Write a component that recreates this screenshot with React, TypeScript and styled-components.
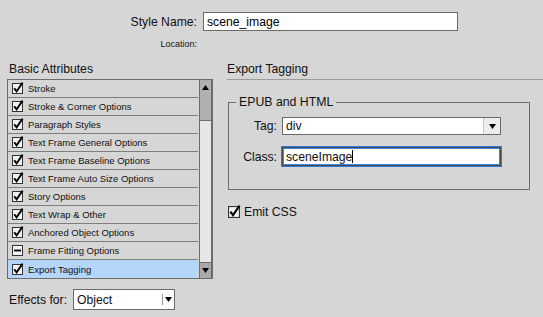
import React from 'react'
import styled, { createGlobalStyle } from 'styled-components'

type CheckState = 'on' | 'off' | 'mixed'

const attributes: { label: string; state: CheckState; selected?: boolean }[] = [
  { label: 'Stroke', state: 'on' },
  { label: 'Stroke & Corner Options', state: 'on' },
  { label: 'Paragraph Styles', state: 'on' },
  { label: 'Text Frame General Options', state: 'on' },
  { label: 'Text Frame Baseline Options', state: 'on' },
  { label: 'Text Frame Auto Size Options', state: 'on' },
  { label: 'Story Options', state: 'on' },
  { label: 'Text Wrap & Other', state: 'on' },
  { label: 'Anchored Object Options', state: 'on' },
  { label: 'Frame Fitting Options', state: 'mixed' },
  { label: 'Export Tagging', state: 'on', selected: true },
]

const GlobalStyle = createGlobalStyle`
  html, body {
    margin: 0;
    padding: 0;
    background: #d6d6d6;
  }
  body {
    font-family: 'Liberation Sans', Arial, sans-serif;
    color: #111;
  }
`

const CheckBox = ({ state, size = 11 }: { state: CheckState; size?: number }) => (
  <BoxSvg width={size} height={size} viewBox="0 0 11 11">
    <rect x="0.5" y="0.5" width="10" height="10" fill="#f2f2f2" stroke="#333" />
    {state === 'on' && (
      <path d="M2.2 5.2 L4.6 8.4 L10.6 -0.4" stroke="#000" strokeWidth="1.9" fill="none" />
    )}
    {state === 'mixed' && <rect x="2" y="4.6" width="7" height="1.8" fill="#000" />}
  </BoxSvg>
)

const Arrow = ({ up }: { up?: boolean }) => (
  <svg width="7" height="5" viewBox="0 0 7 5">
    <path d={up ? 'M0 5 L3.5 0 L7 5 Z' : 'M0 0 L7 0 L3.5 5 Z'} fill="#000" />
  </svg>
)

export default function App() {
  return (
    <Window>
      <GlobalStyle />
      <NameRow>
        <NameLabel>Style Name:</NameLabel>
        <TextField defaultValue="scene_image" />
      </NameRow>
      <NameRow>
        <LocationLabel>Location:</LocationLabel>
      </NameRow>

      <Columns>
        <LeftColumn>
          <SectionTitle>Basic Attributes</SectionTitle>
          <ListBox>
            <Rows>
              {attributes.map((a, i) => (
                <Row key={a.label} selected={a.selected} last={i === attributes.length - 1}>
                  <CheckBox state={a.state} />
                  <span>{a.label}</span>
                </Row>
              ))}
            </Rows>
            <ScrollBar>
              <ScrollButton>
                <Arrow up />
              </ScrollButton>
              <Thumb />
              <Track />
              <ScrollButton bottom>
                <Arrow />
              </ScrollButton>
            </ScrollBar>
          </ListBox>
          <EffectsRow>
            <span>Effects for:</span>
            <Select width={102} height={21}>
              <SelectValue>Object</SelectValue>
              <SelectArrow plain>
                <Arrow />
              </SelectArrow>
            </Select>
          </EffectsRow>
        </LeftColumn>

        <RightColumn>
          <SectionTitle underline>Export Tagging</SectionTitle>
          <Group>
            <legend>EPUB and HTML</legend>
            <FieldGrid>
              <FieldLabel>Tag:</FieldLabel>
              <Select width={219} height={18}>
                <SelectValue>div</SelectValue>
                <SelectArrow>
                  <Arrow />
                </SelectArrow>
              </Select>
              <FieldLabel>Class:</FieldLabel>
              <FocusField>
                sceneImage
                <Caret />
              </FocusField>
            </FieldGrid>
          </Group>
          <EmitRow>
            <CheckBox state="on" size={12} />
            <span>Emit CSS</span>
          </EmitRow>
        </RightColumn>
      </Columns>
    </Window>
  )
}

const Window = styled.div`
  width: 543px;
  height: 317px;
  box-sizing: border-box;
  padding-top: 12px;
  overflow: hidden;
  font-size: 12.2px;
`

const NameRow = styled.div`
  display: grid;
  grid-template-columns: 197px 255px;
  column-gap: 6px;
  align-items: center;
`

const NameLabel = styled.label`
  text-align: right;
  font-size: 12.2px;
`

const LocationLabel = styled.span`
  text-align: right;
  font-size: 9px;
  line-height: 11px;
  margin-top: 8px;
`

const TextField = styled.input`
  box-sizing: border-box;
  height: 19px;
  width: 255px;
  margin: 0;
  padding: 0 3px;
  border: 1px solid #6a6a6a;
  background: #fff;
  font: 12.2px 'Liberation Sans', Arial, sans-serif;
  color: #000;
  outline: none;
`

const Columns = styled.div`
  display: grid;
  grid-template-columns: 219px 1fr;
  margin-top: 12px;
`

const LeftColumn = styled.div`
  padding-left: 7px;
`

const RightColumn = styled.div`
  padding-left: 8px;
`

const SectionTitle = styled.div<{ underline?: boolean }>`
  font-size: 12.2px;
  line-height: 14px;
  height: 14px;
  padding-left: ${(p) => (p.underline ? 0 : 2)}px;
  padding-bottom: 3px;
  border-bottom: 1px solid ${(p) => (p.underline ? '#9c9c9c' : 'transparent')};
  margin-bottom: ${(p) => (p.underline ? 0 : -1)}px;
`

const ListBox = styled.div`
  display: flex;
  width: 206px;
  box-sizing: border-box;
  border: 1px solid #6c6c6c;
`

const Rows = styled.div`
  flex: 1;
  margin-right: 1px;
`

const Row = styled.div<{ selected?: boolean; last?: boolean }>`
  display: flex;
  align-items: center;
  gap: 5px;
  height: 18px;
  box-sizing: border-box;
  padding-left: 4px;
  border-bottom: ${(p) => (p.last ? 'none' : '1px solid #7e7e7e')};
  background: ${(p) => (p.selected ? '#b5d5fb' : 'transparent')};
  font-size: 9.5px;
  color: #111;
`

const BoxSvg = styled.svg`
  flex: none;
  overflow: visible;
`

const ScrollBar = styled.div`
  display: flex;
  flex-direction: column;
  width: 13px;
  box-sizing: border-box;
  border-left: 1px solid #6c6c6c;
  border-right: 1px solid #6c6c6c;
`

const ScrollButton = styled.div<{ bottom?: boolean }>`
  display: flex;
  align-items: center;
  justify-content: center;
  height: 15px;
  background: ${(p) => (p.bottom ? '#a9a9a9' : '#b0b0b0')};
  border-top: ${(p) => (p.bottom ? '1px solid #6c6c6c' : 'none')};
`

const Thumb = styled.div`
  height: 25px;
  background: #b0b0b0;
  border-bottom: 1px solid #6c6c6c;
`

const Track = styled.div`
  flex: 1;
  background: #e6e6e6;
`

const EffectsRow = styled.div`
  display: flex;
  align-items: center;
  gap: 6px;
  margin-top: 10px;
  padding-left: 2px;
`

const Select = styled.div<{ width: number; height: number }>`
  display: flex;
  width: ${(p) => p.width}px;
  height: ${(p) => p.height}px;
  box-sizing: border-box;
  border: 1px solid #6a6a6a;
  background: #fff;
`

const SelectValue = styled.span`
  flex: 1;
  display: flex;
  align-items: center;
  padding-left: 3px;
`

const SelectArrow = styled.span<{ plain?: boolean }>`
  display: flex;
  align-items: center;
  justify-content: center;
  width: ${(p) => (p.plain ? 11 : 16)}px;
  margin: ${(p) => (p.plain ? '4px 0' : 0)};
  border-left: 1px solid ${(p) => (p.plain ? '#9a9a9a' : '#c6c6c6')};
  background: ${(p) => (p.plain ? '#fff' : '#ededed')};
`

const Group = styled.fieldset`
  width: 302px;
  box-sizing: border-box;
  margin: 15px 0 0 1px;
  padding: 8px 0 23px 0;
  border: 1px solid #6e6e6e;

  legend {
    margin-left: 7px;
    padding: 0 3px;
    font-size: 12.3px;
    line-height: 14px;
  }
`

const FieldGrid = styled.div`
  display: grid;
  grid-template-columns: 48px 219px;
  column-gap: 5px;
  row-gap: 12px;
  align-items: center;
`

const FieldLabel = styled.span`
  text-align: right;
`

const FocusField = styled.div`
  display: flex;
  align-items: center;
  height: 19px;
  box-sizing: border-box;
  padding-left: 3px;
  border: 1px solid #4a4a4a;
  box-shadow: 0 0 0 1px #2f7ad6, inset 0 0 0 1px #3d86dc;
  background: #fff;
`

const Caret = styled.span`
  width: 1px;
  height: 13px;
  background: #000;
`

const EmitRow = styled.div`
  display: flex;
  align-items: center;
  gap: 4px;
  height: 14px;
  margin: 15px 0 0 1px;
`
